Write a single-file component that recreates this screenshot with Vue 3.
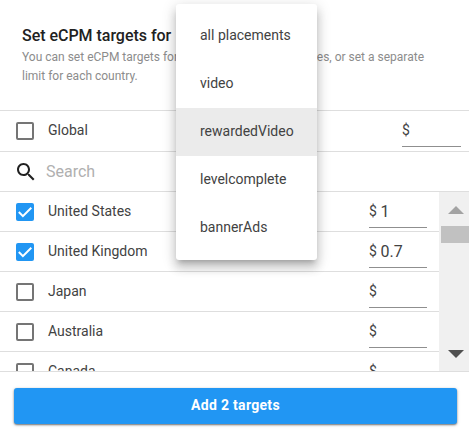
<script setup>
import { ref, computed } from 'vue'

const placements = ['all placements', 'video', 'rewardedVideo', 'levelcomplete', 'bannerAds']
const selected = ref('rewardedVideo')
const globalOn = ref(false)
const globalValue = ref('')
const query = ref('')
const countries = ref([
  { name: 'United States', on: true, value: '1' },
  { name: 'United Kingdom', on: true, value: '0.7' },
  { name: 'Japan', on: false, value: '' },
  { name: 'Australia', on: false, value: '' },
  { name: 'Canada', on: false, value: '' }
])
const count = computed(() => countries.value.filter(c => c.on).length)
</script>

<template>
  <div class="dialog">
    <header class="head">
      <h1>Set eCPM targets for</h1>
      <p class="split"><span>You can set eCPM targets for</span><span>es, or set a separate</span></p>
      <p>limit for each country.</p>
    </header>

    <div class="row global">
      <span class="box" :class="{ on: globalOn }" @click="globalOn = !globalOn"></span>
      <span class="name">Global</span>
      <label class="field"><span class="cur">$</span><input v-model="globalValue" /></label>
    </div>

    <div class="search">
      <svg width="24" height="24" viewBox="0 0 24 24">
        <path fill="#212121" d="M15.5 14h-.79l-.28-.27C15.41 12.59 16 11.11 16 9.5 16 5.91 13.09 3 9.5 3S3 5.91 3 9.5 5.91 16 9.5 16c1.61 0 3.09-.59 4.23-1.57l.27.28v.79l5 4.99L20.49 19l-4.99-5zm-6 0C7.01 14 5 11.99 5 9.5S7.01 5 9.5 5 14 7.01 14 9.5 11.99 14 9.5 14z" />
      </svg>
      <input v-model="query" placeholder="Search" />
    </div>

    <div class="list">
      <div class="rows">
        <div v-for="c in countries" :key="c.name" class="row">
          <span class="box" :class="{ on: c.on }" @click="c.on = !c.on">
            <svg v-if="c.on" width="18" height="18" viewBox="0 0 18 18">
              <path d="M2.8 9 6.9 13.1 15.3 4.7" fill="none" stroke="#fff" stroke-width="2" />
            </svg>
          </span>
          <span class="name">{{ c.name }}</span>
          <label class="field"><span class="cur">$</span><input v-model="c.value" /></label>
        </div>
      </div>
      <div class="bar">
        <svg class="up" width="16" height="8" viewBox="0 0 16 8"><path d="M0 8 8 0l8 8z" fill="#a3a3a3" /></svg>
        <div class="thumb"></div>
        <svg class="down" width="16" height="8" viewBox="0 0 16 8"><path d="M0 0h16L8 8z" fill="#505050" /></svg>
      </div>
    </div>

    <footer class="foot">
      <button>Add {{ count }} targets</button>
    </footer>

    <ul class="menu">
      <li v-for="p in placements" :key="p" :class="{ active: p === selected }" @click="selected = p">{{ p }}</li>
    </ul>
  </div>
</template>

<style>
body {
  background: #fff;
  overflow: hidden;
}
</style>

<style scoped>
.dialog {
  position: relative;
  box-sizing: border-box;
  width: 469px;
  height: 438px;
  overflow: hidden;
  font-family: Roboto, sans-serif;
  font-size: 14px;
  color: #424242;
}
.head {
  box-sizing: border-box;
  height: 111px;
  padding: 25px 22px 0;
  border-bottom: 1px solid #dedede;
}
h1 {
  margin: 0;
  font-size: 16px;
  line-height: 22px;
  font-weight: 500;
  letter-spacing: -0.03px;
  color: #212121;
}
p {
  margin: 0;
  font-size: 12px;
  line-height: 19px;
  color: #8c8c8c;
}
.split {
  display: flex;
  justify-content: space-between;
  width: 402px;
  padding-top: 1px;
}
.row {
  box-sizing: border-box;
  display: flex;
  height: 40px;
  padding: 0 12px 0 16px;
  border-bottom: 1px solid #dedede;
}
.global {
  height: 41px;
  padding-right: 8px;
}
.box {
  box-sizing: border-box;
  width: 18px;
  height: 18px;
  margin-top: 11px;
  border: 2px solid #757575;
  border-radius: 2px;
}
.box.on {
  border: 0;
  background: #2196f3;
}
.box svg {
  display: block;
}
.name {
  flex: 1;
  padding-left: 14px;
  line-height: 38px;
}
.field {
  box-sizing: border-box;
  display: flex;
  width: 58px;
  height: 36px;
  border-bottom: 1px solid #8f8f8f;
}
.global .field {
  width: 59px;
}
.cur {
  width: 11.5px;
  line-height: 38px;
}
input {
  flex: 1;
  min-width: 0;
  padding: 0;
  border: 0;
  outline: 0;
  background: transparent;
  font: 16px Roboto, sans-serif;
  color: #424242;
}
.field input {
  height: 38px;
}
.search {
  box-sizing: border-box;
  display: flex;
  align-items: center;
  gap: 8px;
  height: 40px;
  padding-left: 14px;
  border-bottom: 1px solid #dedede;
}
.search input::placeholder {
  color: #b0b0b0;
}
.list {
  box-sizing: border-box;
  display: flex;
  height: 180px;
  overflow: hidden;
  border-bottom: 1px solid #dedede;
}
.rows {
  flex: 1;
}
.bar {
  box-sizing: border-box;
  display: flex;
  flex-direction: column;
  width: 30px;
  padding: 14px 0 13px 2px;
  background: #f0f0f0;
}
.bar svg {
  margin-left: 7px;
}
.thumb {
  height: 17px;
  margin-top: 12px;
  background: #c1c1c1;
}
.down {
  margin-top: auto;
}
.foot {
  padding: 16px 12px 0 14px;
}
button {
  display: block;
  width: 100%;
  height: 36px;
  padding: 0 0 2px;
  border: 0;
  border-radius: 3px;
  background: #2196f3;
  box-shadow: 0 1px 2px rgba(0, 0, 0, 0.5), 0 1px 4px rgba(0, 0, 0, 0.12);
  font: 700 14px Roboto, sans-serif;
  letter-spacing: 0.3px;
  color: #fff;
}
.menu {
  position: absolute;
  top: 4px;
  left: 176px;
  box-sizing: border-box;
  width: 141px;
  margin: 0;
  padding: 8px 0;
  list-style: none;
  border-radius: 3px;
  background: #fff;
  box-shadow: 0 5px 5px -3px rgba(0, 0, 0, 0.2), 0 8px 10px 1px rgba(0, 0, 0, 0.14), 0 3px 14px 2px rgba(0, 0, 0, 0.12);
}
li {
  height: 48px;
  padding-left: 24px;
  line-height: 46px;
}
li.active {
  background: #ebebeb;
}
</style>
